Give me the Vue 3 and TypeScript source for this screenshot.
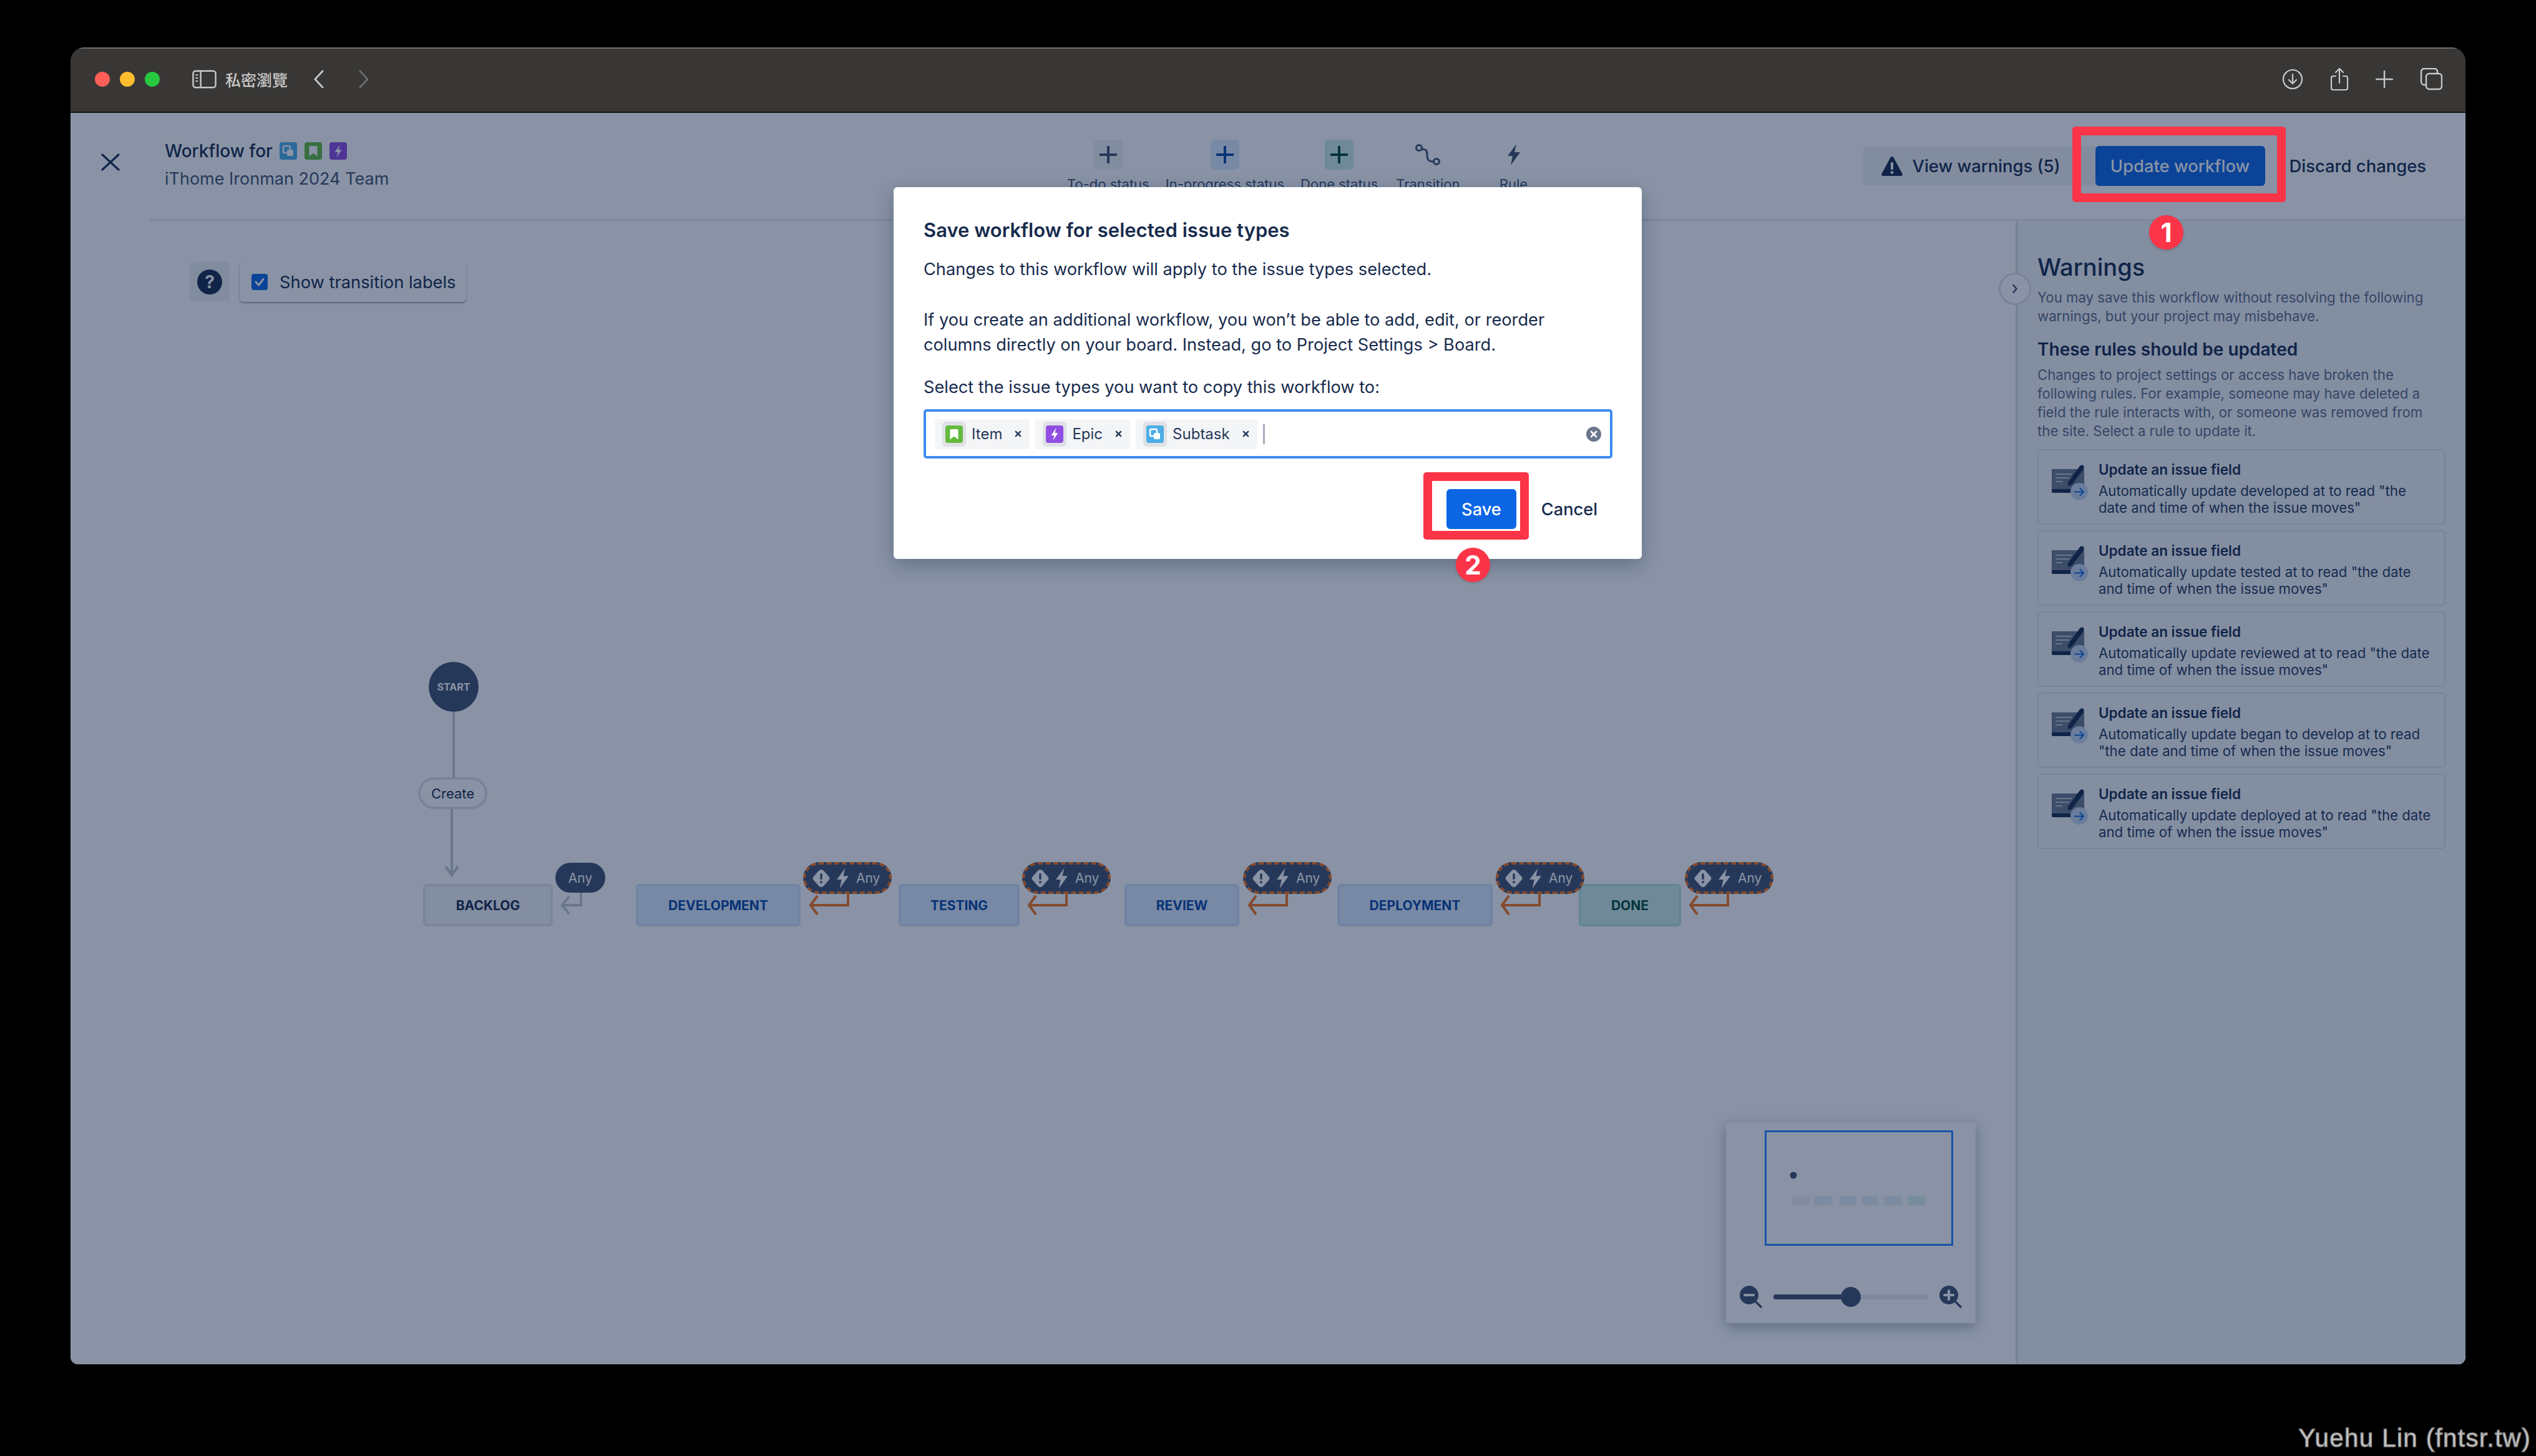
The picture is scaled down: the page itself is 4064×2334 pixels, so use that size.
<script setup lang="ts">
const ORIGIN = { x: 113, y: 355 }

type Status = { label: string; x: number; w: number; kind: string }
const statuses: Status[] = [
  { label: 'BACKLOG', x: 678, w: 208, kind: 'todo' },
  { label: 'DEVELOPMENT', x: 1019, w: 264, kind: 'prog' },
  { label: 'TESTING', x: 1440, w: 194, kind: 'prog' },
  { label: 'REVIEW', x: 1802, w: 184, kind: 'prog' },
  { label: 'DEPLOYMENT', x: 2143, w: 249, kind: 'prog' },
  { label: 'DONE', x: 2530, w: 164, kind: 'done' },
]
const warnPills = [
  { x: 1287, stem: 1359, tip: 1299 },
  { x: 1638, stem: 1709, tip: 1649 },
  { x: 1992, stem: 2062, tip: 2002 },
  { x: 2397, stem: 2467, tip: 2407 },
  { x: 2700, stem: 2769, tip: 2709 },
]
const tools = [
  { label: 'To-do status', kind: 'todo', icon: 'plus' },
  { label: 'In-progress status', kind: 'prog', icon: 'plus' },
  { label: 'Done status', kind: 'done', icon: 'plus' },
  { label: 'Transition', kind: 'plain', icon: 'route' },
  { label: 'Rule', kind: 'rule', icon: 'bolt' },
]
const rules = [
  ['Automatically update developed at to read "the', 'date and time of when the issue moves"'],
  ['Automatically update tested at to read "the date', 'and time of when the issue moves"'],
  ['Automatically update reviewed at to read "the date', 'and time of when the issue moves"'],
  ['Automatically update began to develop at to read', '"the date and time of when the issue moves"'],
  ['Automatically update deployed at to read "the date', 'and time of when the issue moves"'],
]
const chips = [
  { label: 'Item', icon: '#i-item' },
  { label: 'Epic', icon: '#i-epic' },
  { label: 'Subtask', icon: '#i-sub' },
]
const cx = (x: number) => x - ORIGIN.x
const cy = (y: number) => y - ORIGIN.y
const px = (x: number) => `${cx(x)}px`
</script>

<template>
  <div class="page">
    <svg class="defs" width="0" height="0" aria-hidden="true">
      <symbol id="i-item" viewBox="0 0 28 28">
        <rect width="28" height="28" rx="4" fill="#63ba3c" />
        <path d="M8.500 6h11a1 1 0 0 1 1 1v15.500L14 17.500l-6.500 5V7a1 1 0 0 1 1-1z" fill="#fff" />
      </symbol>
      <symbol id="i-epic" viewBox="0 0 28 28">
        <rect width="28" height="28" rx="4" fill="#904ee2" />
        <path d="M16.500 4 8.500 16h5L11.500 24l8-12h-5z" fill="#fff" />
      </symbol>
      <symbol id="i-sub" viewBox="0 0 28 28">
        <rect width="28" height="28" rx="4" fill="#4bade8" />
        <rect x="6" y="6" width="11" height="11" rx="2" fill="none" stroke="#fff" stroke-width="2.500" />
        <rect x="12" y="12" width="10" height="10" rx="2" fill="#fff" />
      </symbol>
      <symbol id="i-bolt" viewBox="0 0 24 34">
        <path d="M16 0 2 19h8L7 34 22 13h-9z" fill="currentColor" />
      </symbol>
      <symbol id="i-alert" viewBox="0 0 28 28">
        <path d="M14 0c2 0 3 1 4 2l8 9c2 2 2 4 0 6l-8 9c-1 1-2 2-4 2s-3-1-4-2l-8-9c-2-2-2-4 0-6l8-9c1-1 2-2 4-2z" fill="#fff" />
        <rect x="12.300" y="6" width="3.400" height="10" rx="1.500" fill="#42526e" />
        <circle cx="14" cy="20" r="2" fill="#42526e" />
      </symbol>
      <symbol id="i-card" viewBox="0 0 60 56">
        <path d="M2 10h52v36H2z" fill="#6b778c" />
        <path d="M2 42h52v4a2 2 0 0 1-2 2H4a2 2 0 0 1-2-2z" fill="#172b4d" />
        <path d="M8 18h26M8 24h22M8 30h11" stroke="#c1c7d0" stroke-width="2" />
        <path d="M28 31 47 5c2-2 5-2 6 0s1 3 0 5L34 35l-6 2z" fill="#172b4d" />
      </symbol>
    </svg>

    <div class="window">
      <div class="titlebar">
        <div class="lights"><i class="red"></i><i class="yellow"></i><i class="green"></i></div>
        <svg class="sidebar-icon" viewBox="0 0 40 30" width="39" height="30">
          <rect x="1.500" y="1.500" width="37" height="27" rx="4" fill="none" stroke="#c9c9c9" stroke-width="2.500" />
          <path d="M14 2v26" stroke="#c9c9c9" stroke-width="2.500" />
          <path d="M5.500 8h4M5.500 13h4M5.500 18h4" stroke="#c9c9c9" stroke-width="2" />
        </svg>
        <span class="private">私密瀏覽</span>
        <svg class="nav-back" viewBox="0 0 18 30" width="18" height="30"><path d="M15 2 3 15l12 13" fill="none" stroke="#c9c9c9" stroke-width="2.800" stroke-linecap="round" stroke-linejoin="round" /></svg>
        <svg class="nav-next" viewBox="0 0 18 30" width="18" height="30"><path d="m3 2 12 13L3 28" fill="none" stroke="#6d6c6b" stroke-width="2.800" stroke-linecap="round" stroke-linejoin="round" /></svg>
        <div class="browser-tools">
          <svg viewBox="0 0 34 34" width="34" height="34"><circle cx="17" cy="17" r="15" fill="none" stroke="#c9c9c9" stroke-width="2.200" /><path d="M17 9v15m-6-6 6 6 6-6" fill="none" stroke="#c9c9c9" stroke-width="2.200" stroke-linecap="round" stroke-linejoin="round" /></svg>
          <svg viewBox="0 0 30 38" width="30" height="38"><path d="M9 14H5a3 3 0 0 0-3 3v16a3 3 0 0 0 3 3h20a3 3 0 0 0 3-3V17a3 3 0 0 0-3-3h-4M15 25V2M9 8l6-6 6 6" fill="none" stroke="#c9c9c9" stroke-width="2.200" stroke-linecap="round" stroke-linejoin="round" /></svg>
          <svg viewBox="0 0 28 28" width="28" height="28"><path d="M14 1v26M1 14h26" stroke="#c9c9c9" stroke-width="2.400" stroke-linecap="round" /></svg>
          <svg viewBox="0 0 36 36" width="36" height="36"><rect x="10" y="9" width="25" height="25" rx="5" fill="none" stroke="#c9c9c9" stroke-width="2.400" /><path d="M10 27H7a5 5 0 0 1-5-5V6a5 5 0 0 1 5-5h16a5 5 0 0 1 5 5v3" fill="none" stroke="#c9c9c9" stroke-width="2.400" /></svg>
        </div>
      </div>

      <div class="content">
        <header class="head">
          <button class="close" aria-label="Close">
            <svg viewBox="0 0 30 28" width="30" height="28"><path d="m2 2 26 24M28 2 2 26" stroke="#172b4d" stroke-width="3.200" stroke-linecap="round" /></svg>
          </button>
          <div class="title-block">
            <div class="wf-title">
              <span>Workflow for</span>
              <svg class="type-icon"><use href="#i-sub" /></svg>
              <svg class="type-icon"><use href="#i-item" /></svg>
              <svg class="type-icon"><use href="#i-epic" /></svg>
            </div>
            <div class="wf-sub">iThome Ironman 2024 Team</div>
          </div>
          <div class="toolbar">
            <div v-for="t in tools" :key="t.label" class="tool" :class="t.kind">
              <div class="tool-icon">
                <svg v-if="t.icon === 'plus'" viewBox="0 0 28 28" width="28" height="28"><path d="M14 1v26M1 14h26" stroke="currentColor" stroke-width="4" stroke-linecap="round" /></svg>
                <svg v-else-if="t.icon === 'route'" viewBox="0 0 40 34" width="40" height="34"><circle cx="6" cy="6" r="4.500" fill="none" stroke="currentColor" stroke-width="3" /><circle cx="34" cy="28" r="4.500" fill="none" stroke="currentColor" stroke-width="3" /><path d="M10 8c8 0 9 3 9 9s1 11 10 11" fill="none" stroke="currentColor" stroke-width="3" /></svg>
                <svg v-else width="24" height="34"><use href="#i-bolt" /></svg>
              </div>
              <span class="tool-label">{{ t.label }}</span>
            </div>
          </div>
          <div class="actions">
            <button class="warnings-btn">
              <svg viewBox="0 0 34 32" width="34" height="32"><path d="M17 1c1 0 2 .6 2.500 1.500l14 26c.8 1.500-.2 3.500-2 3.500H2.500c-1.800 0-2.800-2-2-3.500l14-26C15 1.600 16 1 17 1z" fill="#172b4d" /><rect x="15" y="10" width="4" height="12" rx="1.500" fill="#fff" /><circle cx="17" cy="26.500" r="2.300" fill="#fff" /></svg>
              View warnings (5)
            </button>
            <button class="update-btn">Update workflow</button>
            <button class="discard-btn">Discard changes</button>
          </div>
        </header>

        <div class="main">
          <section class="canvas">
            <div class="canvas-tools">
              <button class="help" aria-label="Help"><span>?</span></button>
              <label class="labels-toggle">
                <span class="check">
                  <svg viewBox="0 0 26 26" width="26" height="26"><path d="m7 13 4.500 5L19 8.500" fill="none" stroke="#fff" stroke-width="3.200" stroke-linecap="round" stroke-linejoin="round" /></svg>
                </span>
                Show transition labels
              </label>
            </div>

            <svg class="edges" width="3000" height="1830">
              <path :d="`M${cx(727)} ${cy(1141)}V${cy(1246)}`" class="edge" />
              <path :d="`M${cx(724)} ${cy(1297)}V${cy(1403)}M${cx(714)} ${cy(1389)}l10 14 10-14`" class="edge" />
              <path :d="`M${cx(931)} ${cy(1431)}V${cy(1451)}H${cx(902)}M${cx(912)} ${cy(1437)}l-11 14 11 14`" class="edge" />
              <path
                v-for="p in warnPills"
                :key="p.x"
                :d="`M${cx(p.stem)} ${cy(1433)}V${cy(1451)}H${cx(p.tip)}M${cx(p.tip + 11)} ${cy(1436)}l-11 15 11 15`"
                class="edge warn"
              />
            </svg>

            <div class="start">START</div>
            <div class="create">Create</div>
            <div
              v-for="s in statuses"
              :key="s.label"
              class="status"
              :class="s.kind"
              :style="{ left: px(s.x), width: `${s.w}px` }"
            >{{ s.label }}</div>
            <div class="any">Any</div>
            <div v-for="p in warnPills" :key="p.x" class="any-warn" :style="{ left: px(p.x) }">
              <svg width="28" height="28"><use href="#i-alert" /></svg>
              <svg class="pill-bolt" width="23" height="32"><use href="#i-bolt" /></svg>
              <span>Any</span>
            </div>

            <aside class="minimap">
              <div class="viewport">
                <svg viewBox="0 0 296 179" width="296" height="179">
                  <circle cx="43" cy="69" r="5.500" fill="#42526e" />
                  <g class="mini-nodes">
                    <rect x="41" y="103" width="28" height="14" fill="#f0f1f4" />
                    <rect x="75" y="103" width="30" height="14" fill="#e6eefa" />
                    <rect x="117" y="103" width="27" height="14" fill="#e6eefa" />
                    <rect x="153" y="103" width="26" height="14" fill="#e6eefa" />
                    <rect x="187" y="103" width="30" height="14" fill="#e6eefa" />
                    <rect x="227" y="103" width="27" height="14" fill="#d8f1ea" />
                  </g>
                </svg>
              </div>
              <div class="zoom-row">
                <svg viewBox="0 0 36 36" width="36" height="36"><circle cx="15" cy="15" r="15" fill="#42526e" /><path d="M8 15h14" stroke="#fff" stroke-width="4" stroke-linecap="round" /><path d="m24 24 10 10" stroke="#42526e" stroke-width="3.500" stroke-linecap="round" /></svg>
                <div class="track"><div class="fill"></div><div class="thumb"></div></div>
                <svg viewBox="0 0 36 36" width="36" height="36"><circle cx="15" cy="15" r="15" fill="#42526e" /><path d="M8 15h14M15 8v14" stroke="#fff" stroke-width="4" stroke-linecap="round" /><path d="m24 24 10 10" stroke="#42526e" stroke-width="3.500" stroke-linecap="round" /></svg>
              </div>
            </aside>
          </section>

          <aside class="panel">
            <button class="panel-toggle" aria-label="Collapse">
              <svg viewBox="0 0 12 18" width="10" height="16"><path d="m3 2 6 7-6 7" fill="none" stroke="#42526e" stroke-width="3" stroke-linecap="round" stroke-linejoin="round" /></svg>
            </button>
            <h2>Warnings</h2>
            <p class="muted intro">You may save this workflow without resolving the following<br />warnings, but your project may misbehave.</p>
            <h3>These rules should be updated</h3>
            <p class="muted">Changes to project settings or access have broken the<br />following rules. For example, someone may have deleted a<br />field the rule interacts with, or someone was removed from<br />the site. Select a rule to update it.</p>
            <ul class="rules">
              <li v-for="(r, i) in rules" :key="i" class="rule-card">
                <div class="rule-icon">
                  <svg width="60" height="56"><use href="#i-card" /></svg>
                  <span class="rule-arrow">
                    <svg viewBox="0 0 18 16" width="17" height="15"><path d="M1 8h15M10 2l6 6-6 6" fill="none" stroke="#0c66e4" stroke-width="2.200" stroke-linecap="round" stroke-linejoin="round" /></svg>
                  </span>
                </div>
                <div class="rule-text">
                  <strong>Update an issue field</strong>
                  <span>{{ r[0] }}<br />{{ r[1] }}</span>
                </div>
              </li>
            </ul>
          </aside>
        </div>
        <div class="dim"></div>
      </div>
    </div>

    <div class="mark mark-update"></div>
    <div class="num num-1">1</div>

    <section class="modal">
      <h1>Save workflow for selected issue types</h1>
      <p class="m1">Changes to this workflow will apply to the issue types selected.</p>
      <p class="m2">If you create an additional workflow, you won’t be able to add, edit, or reorder<br />columns directly on your board. Instead, go to Project Settings &gt; Board.</p>
      <p class="m3">Select the issue types you want to copy this workflow to:</p>
      <div class="select">
        <span v-for="c in chips" :key="c.label" class="chip">
          <span class="chip-icon"><svg width="28" height="28"><use :href="c.icon" /></svg></span>
          <span class="chip-label">{{ c.label }}</span>
          <svg class="chip-x" viewBox="0 0 12 12" width="11" height="11"><path d="m2 2 8 8M10 2l-8 8" stroke="#253858" stroke-width="2.600" stroke-linecap="round" /></svg>
        </span>
        <i class="caret"></i>
        <svg class="clear" viewBox="0 0 24 24" width="24" height="24"><circle cx="12" cy="12" r="12" fill="#6b778c" /><path d="m8 8 8 8M16 8l-8 8" stroke="#fff" stroke-width="2.600" stroke-linecap="round" /></svg>
      </div>
      <footer class="modal-foot">
        <button class="save">Save</button>
        <button class="cancel">Cancel</button>
      </footer>
    </section>

    <div class="mark mark-save"></div>
    <div class="num num-2">2</div>

    <div class="watermark">Yuehu Lin (fntsr.tw)</div>
  </div>
</template>

<style>
html, body { margin: 0; background: #000; }
</style>

<style scoped>
* { box-sizing: border-box; }
button { font: inherit; border: 0; background: none; color: inherit; padding: 0; }
h1, h2, h3, p, ul { margin: 0; padding: 0; }
ul { list-style: none; }

.page {
  position: relative;
  width: 4064px;
  height: 2334px;
  overflow: hidden;
  background: #000;
  padding: 76px 113px 147px 113px;
  font-family: Inter, "Noto Sans", sans-serif;
  color: #172b4d;
}
.defs { position: absolute; }

.window {
  display: flex;
  flex-direction: column;
  height: 100%;
  border-radius: 22px 22px 12px 12px;
  overflow: hidden;
}
.titlebar {
  flex: 0 0 105px;
  display: flex;
  align-items: center;
  padding: 0 37px 3px 39px;
  background: #383736;
  border-top: 2px solid #6f6e6d;
  border-bottom: 2px solid #141414;
}
.lights { display: flex; gap: 16px; margin-right: 52px; }
.lights i { width: 24px; height: 24px; border-radius: 50%; display: block; }
.red { background: #fe5f57; }
.yellow { background: #febc2e; }
.green { background: #28c840; }
.private {
  margin-left: 14px;
  font: 500 25px "Noto Sans CJK TC", sans-serif;
  color: #c9c9c9;
}
.nav-back { margin-left: 41px; }
.nav-next { margin-left: 54px; }
.browser-tools { margin-left: auto; display: flex; align-items: center; gap: 43px; }

.content { position: relative; flex: 1; display: flex; flex-direction: column; background: #fff; min-height: 0; }
.dim { position: absolute; inset: 0; background: rgba(9, 30, 66, 0.48); }

.head { position: relative; flex: 0 0 174px; display: flex; align-items: center; }
.head::after {
  content: "";
  position: absolute;
  left: 127px; right: 0; bottom: 0;
  height: 4px;
  background: #ebecf0;
}
.close { width: 30px; height: 28px; margin: 0 0 16px 49px; display: block; }
.close svg { display: block; }
.title-block { width: 1446px; margin-left: 72px; margin-bottom: 8px; }
.wf-title { display: flex; align-items: center; font-size: 28px; font-weight: 500; line-height: 40px; }
.type-icon { width: 28px; height: 28px; margin-left: 12px; }
.wf-title .type-icon:first-of-type { margin-left: 11px; }
.wf-sub { margin-top: 5px; font-size: 27px; line-height: 40px; color: #42526e; }

.toolbar { display: flex; gap: 26px; align-self: flex-start; margin-top: 43px; }
.tool { display: flex; flex-direction: column; align-items: center; gap: 8px; color: #42526e; }
.tool.plain { margin-left: 3px; }
.tool.rule { margin-left: 37px; }
.tool-icon { width: 46px; height: 48px; display: flex; align-items: center; justify-content: center; border-radius: 6px; }
.tool.todo .tool-icon { background: #f1f2f4; }
.tool.prog .tool-icon { background: #deebff; color: #0747a6; }
.tool.done .tool-icon { background: #d0ebe8; color: #014a33; }
.tool-label { font-size: 22px; line-height: 30px; color: #42526e; white-space: nowrap; }

.actions { margin-left: auto; margin-bottom: 4px; padding-right: 63px; display: flex; align-items: center; }
.warnings-btn {
  display: flex; align-items: center; gap: 16px;
  height: 64px; width: 372px; padding-left: 29px;
  background: #f1f2f4; border-radius: 6px 0 0 6px;
  font-size: 27.400px; font-weight: 500; color: #172b4d; white-space: nowrap;
}
.update-btn {
  height: 64px; width: 272px; border-radius: 6px;
  background: #0c66e4; color: #fff; font-size: 27.400px; font-weight: 500;
}
.discard-btn { margin-left: 39px; font-size: 27.400px; font-weight: 500; white-space: nowrap; }

.main { position: relative; flex: 1; display: flex; min-height: 0; }
.canvas { position: relative; flex: 1; min-width: 0; }
.canvas-tools { display: flex; gap: 16px; padding: 65px 0 0 191px; }
.help {
  width: 64px; height: 64px; border-radius: 6px;
  background: #f1f2f4;
  display: flex; align-items: center; justify-content: center;
}
.help span {
  width: 40px; height: 40px; border-radius: 50%;
  background: #172b4d; color: #fff;
  font-size: 28px; font-weight: 700; line-height: 40px; text-align: center;
}
.labels-toggle {
  display: flex; align-items: center; gap: 19px;
  width: 363px; height: 64px; padding-left: 19px;
  background: #fff; border-radius: 6px;
  box-shadow: 0 2px 3px rgba(9, 30, 66, 0.4);
  font-size: 27.300px; color: #172b4d; white-space: nowrap;
}
.check { width: 26px; height: 26px; background: #0c66e4; border-radius: 4px; display: block; }
.check svg { display: block; }

.edges { position: absolute; left: 0; top: 0; pointer-events: none; }
.edge { fill: none; stroke: #c1c7d0; stroke-width: 4; }
.edge.warn { stroke: #f5731c; }

.start {
  position: absolute; left: 574px; top: 706px;
  width: 80px; height: 80px; border-radius: 50%;
  background: #42526e; color: #fff;
  display: flex; align-items: center; justify-content: center;
  font-size: 16px; font-weight: 700;
}
.create {
  position: absolute; left: 557px; top: 891px;
  width: 111px; height: 51px; border-radius: 26px;
  background: #fff; border: 4px solid #dfe1e6;
  display: flex; align-items: center; justify-content: center;
  font-size: 22px;
}
.status {
  position: absolute; top: 1062px; height: 68px;
  border-radius: 6px; border: 4px solid;
  display: flex; align-items: center; justify-content: center;
  font-size: 21px; font-weight: 700;
}
.status.todo { background: #f4f5f7; border-color: #e4e6ea; color: #172b4d; }
.status.prog { background: #deebff; border-color: #cfe0fb; color: #0747a6; }
.status.done { background: #d0ebe8; border-color: #b6e4da; color: #014a33; }
.any {
  position: absolute; left: 777px; top: 1028px;
  width: 80px; height: 48px; border-radius: 24px;
  background: #42526e; color: #fff;
  display: flex; align-items: center; justify-content: center;
  font-size: 21px;
}
.any-warn {
  position: absolute; top: 1027px;
  width: 142px; height: 51px; border-radius: 26px;
  background: #42526e; color: #fff;
  border: 4px dashed #f5731c;
  display: flex; align-items: center; padding-left: 11px;
  font-size: 21px;
}
.pill-bolt { margin-left: 9px; color: #fff; }
.any-warn span { margin-left: 10px; }

.minimap {
  position: absolute; left: 2653px; top: 1444px;
  width: 400px; height: 322px;
  background: #fff; border-radius: 4px;
  box-shadow: 0 6px 22px rgba(9, 30, 66, 0.35);
  display: flex; flex-direction: column; justify-content: space-between;
  padding: 13px 22px 24px 22px;
}
.viewport { margin-left: 40px; width: 302px; height: 185px; border: 3px solid #2684ff; }
.viewport svg { display: block; }
.mini-nodes { filter: blur(1px); }
.zoom-row { display: flex; align-items: center; gap: 18px; }
.track { position: relative; width: 248px; height: 8px; border-radius: 4px; background: #ebecf0; }
.fill { width: 124px; height: 8px; border-radius: 4px; background: #42526e; }
.thumb {
  position: absolute; left: 108px; top: -12px;
  width: 32px; height: 32px; border-radius: 50%; background: #42526e;
}

.panel {
  position: relative;
  flex: 0 0 721px;
  background: #f4f5f7;
  border-left: 4px solid #dfe1e6;
  padding: 49px 32px 0 31px;
}
.panel-toggle {
  position: absolute; left: -31px; top: 82px;
  width: 52px; height: 52px; border-radius: 50%;
  background: #fff; border: 3px solid #dfe1e6;
  display: flex; align-items: center; justify-content: center;
}
.panel h2 { font-size: 38px; font-weight: 500; line-height: 48px; }
.muted { font-size: 22.200px; line-height: 30px; color: #5e6c84; white-space: nowrap; }
.intro { margin-top: 10px; }
.panel h3 { margin: 20px 0 8px; font-size: 28px; font-weight: 600; line-height: 36px; }
.rules { margin-top: 14px; display: flex; flex-direction: column; gap: 9px; }
.rule-card {
  height: 121px;
  display: flex;
  padding: 17px 0 0 19px;
  border: 2px solid #dfe1e6; border-radius: 6px;
  background: #f4f5f7;
}
.rule-icon { position: relative; flex: 0 0 77px; padding-top: 3px; }
.rule-icon > svg { display: block; }
.rule-arrow {
  position: absolute; left: 32px; top: 35px;
  width: 28px; height: 28px; border-radius: 50%;
  background: #c6d5ee;
  display: flex; align-items: center; justify-content: center;
}
.rule-text { display: flex; flex-direction: column; font-size: 22.200px; line-height: 27px; white-space: nowrap; color: #253858; }
.rule-text strong { font-size: 22.500px; font-weight: 600; color: #172b4d; margin-bottom: 6px; line-height: 28px; }

.modal {
  position: absolute; left: 1432px; top: 300px;
  width: 1199px; height: 596px;
  padding: 49px 47px 0 48px;
  background: #fff; border-radius: 6px;
  box-shadow: 0 10px 30px rgba(9, 30, 66, 0.3);
  color: #172b4d;
}
.modal h1 { font-size: 31px; font-weight: 600; line-height: 40px; }
.modal p { font-size: 27.200px; line-height: 40px; white-space: nowrap; }
.m1 { margin-top: 23px; }
.m2 { margin-top: 41px; }
.m3 { margin-top: 28px; }
.select {
  position: relative;
  margin-top: 15px;
  height: 79px;
  border: 4px solid #3d8bf2; border-radius: 5px;
  display: flex; align-items: center; gap: 9px;
  padding-left: 14px;
}
.chip {
  display: flex; align-items: center;
  height: 48px; padding: 0 13px 0 12px;
  background: #f4f5f7; border-radius: 3px;
  font-size: 24px; color: #253858;
}
.chip-icon {
  width: 38px; height: 40px; border-radius: 6px; background: #dfe1e6;
  display: flex; align-items: center; justify-content: center;
}
.chip-icon svg { display: block; }
.chip-label { margin-left: 9px; }
.chip-x { margin-left: 20px; }
.caret { width: 3px; height: 32px; background: #a5adba; display: block; }
.clear { position: absolute; right: 14px; top: 24px; }
.modal-foot { margin-top: 49px; display: flex; justify-content: flex-end; gap: 16px; }
.modal-foot button { height: 64px; padding: 0 24px; border-radius: 6px; font-size: 27.200px; font-weight: 500; }
.save { background: #0c66e4; color: #fff; }
.cancel { color: #172b4d; }

.mark { position: absolute; border: 14px solid #fb3448; border-radius: 5px; }
.mark-update { left: 3321px; top: 203px; width: 342px; height: 121px; }
.mark-save { left: 2281px; top: 757px; width: 169px; height: 108px; }
.num {
  position: absolute;
  width: 55px; height: 55px; border-radius: 50%;
  background: #fb3448; color: #fff;
  display: flex; align-items: center; justify-content: center;
  font-size: 42px; font-weight: 700;
  box-shadow: 0 2px 4px rgba(0, 0, 0, 0.15);
}
.num-1 { left: 3444px; top: 345px; }
.num-2 { left: 2333px; top: 878px; }

.watermark {
  position: absolute; right: 8px; top: 2283px;
  font: 400 40px "Liberation Sans", Arial, sans-serif;
  letter-spacing: 1.500px;
  color: #d0d0d0;
  -webkit-text-stroke: 1.500px #8c8c8c;
  white-space: nowrap;
}
</style>
